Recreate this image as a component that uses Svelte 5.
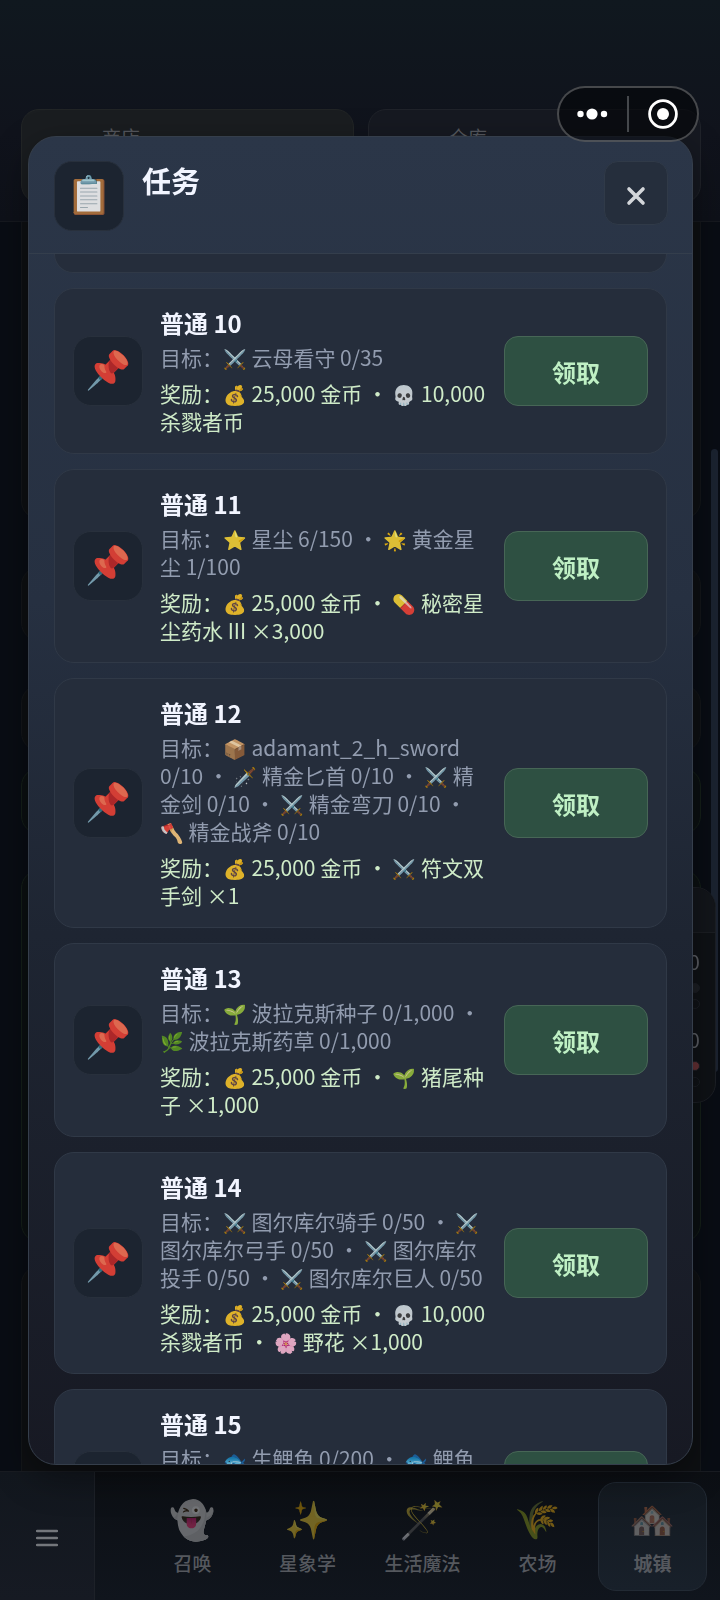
<script>
  const quests = [
    {
      id: 10,
      goal: '⚔️ 云母看守 0/35',
      reward: '💰 25,000 金币 • 💀 10,000 杀戮者币'
    },
    {
      id: 11,
      goal: '⭐ 星尘 6/150 • 🌟 黄金星尘 1/100',
      reward: '💰 25,000 金币 • 💊 秘密星尘药水 III ×3,000'
    },
    {
      id: 12,
      goal: '📦 adamant_2_h_sword 0/10 • 🗡️ 精金匕首 0/10 • ⚔️ 精金剑 0/10 • ⚔️ 精金弯刀 0/10 • 🪓 精金战斧 0/10',
      reward: '💰 25,000 金币 • ⚔️ 符文双手剑 ×1'
    },
    {
      id: 13,
      goal: '🌱 波拉克斯种子 0/1,000 • 🌿 波拉克斯药草 0/1,000',
      reward: '💰 25,000 金币 • 🌱 猪尾种子 ×1,000'
    },
    {
      id: 14,
      goal: '⚔️ 图尔库尔骑手 0/50 • ⚔️ 图尔库尔弓手 0/50 • ⚔️ 图尔库尔投手 0/50 • ⚔️ 图尔库尔巨人 0/50',
      reward: '💰 25,000 金币 • 💀 10,000 杀戮者币 • 🌸 野花 ×1,000'
    },
    {
      id: 15,
      goal: '🐟 生鲤鱼 0/200 • 🐟 鲤鱼',
      reward: ''
    }
  ];

  const tabs = [
    { icon: '👻', label: '召唤' },
    { icon: '✨', label: '星象学' },
    { icon: '🪄', label: '生活魔法' },
    { icon: '🌾', label: '农场' },
    { icon: '🏘️', label: '城镇' }
  ];

  let activeTab = '城镇';
  let open = true;
  let claimed = [];

  function claim(id) {
    claimed = [...claimed, id];
  }

  // every second part is an emoji
  function split(text) {
    return text.split(/(\p{Extended_Pictographic}\uFE0F?)/u);
  }
</script>

<div class="game">
  <header class="town-header">
    <div class="town-card shop">商店</div>
    <div class="town-card">仓库</div>
  </header>

  <main class="town-list">
    <div class="panel tall"></div>
    <div class="panel wide"></div>
    <div class="panel"></div>
    <div class="panel green"></div>
    <div class="panel green grow"></div>
    <div class="panel tail"></div>
  </main>

  <div class="scroll-thumb"></div>

  <aside class="stats">
    <div class="stats-head"></div>
    <div class="stat">
      <span>0</span>
      <i class="dot lit"></i>
      <i class="dot"></i>
    </div>
    <div class="stat">
      <span>0</span>
      <i class="dot red"></i>
      <i class="dot"></i>
    </div>
  </aside>

  <nav class="tabbar">
    <button class="menu" aria-label="菜单">
      <svg width="22" height="18" viewBox="0 0 22 18">
        <path d="M1 2h20M1 9h20M1 16h20" stroke="#74777c" stroke-width="2.4" stroke-linecap="round" />
      </svg>
    </button>
    <div class="tabs">
      {#each tabs as tab (tab.label)}
        <button class="tab" class:active={activeTab === tab.label} on:click={() => (activeTab = tab.label)}>
          <span class="tab-icon">{tab.icon}</span>
          <span class="tab-label">{tab.label}</span>
        </button>
      {/each}
    </div>
  </nav>

  {#if open}
    <div class="overlay">
      <div class="modal" role="dialog" aria-labelledby="quest-title">
        <div class="modal-header">
          <div class="icon-box"><span>📋</span></div>
          <h2 id="quest-title">任务</h2>
          <button class="close" aria-label="关闭" on:click={() => (open = false)}>
            <svg width="20" height="20" viewBox="0 0 20 20">
              <path d="M3 3l14 14M17 3L3 17" stroke="#d3d6da" stroke-width="3.6" stroke-linecap="round" />
            </svg>
          </button>
        </div>

        <div class="modal-body">
          <div class="card-end"></div>
          {#each quests as quest (quest.id)}
            <div class="quest">
              <div class="icon-box"><span>📌</span></div>
              <div class="quest-text">
                <h3>普通 {quest.id}</h3>
                <p class="goal">
                  目标：{#each split(quest.goal) as part, i}{#if i % 2}<span class="emoji">{part}</span>{:else}{part}{/if}{/each}
                </p>
                {#if quest.reward}
                  <p class="reward">
                    奖励：{#each split(quest.reward) as part, i}{#if i % 2}<span class="emoji">{part}</span>{:else}{part}{/if}{/each}
                  </p>
                {/if}
              </div>
              <button class="claim" disabled={claimed.includes(quest.id)} on:click={() => claim(quest.id)}>领取</button>
            </div>
          {/each}
        </div>
      </div>
    </div>
  {/if}

  <div class="capsule">
    <button aria-label="更多">
      <svg width="32" height="14" viewBox="0 0 32 14">
        <circle cx="3.5" cy="7" r="3.2" fill="#fff" />
        <circle cx="15" cy="7" r="5.6" fill="#fff" />
        <circle cx="27" cy="7" r="3.2" fill="#fff" />
      </svg>
    </button>
    <span class="capsule-line"></span>
    <button aria-label="退出">
      <svg width="30" height="30" viewBox="0 0 30 30">
        <circle cx="15" cy="15" r="13.4" fill="none" stroke="#fff" stroke-width="2.8" />
        <circle cx="15" cy="15" r="6" fill="#fff" />
      </svg>
    </button>
  </div>
</div>

<style>
  :global(body) {
    background: #090d14;
    overflow: hidden;
  }

  .game {
    display: flex;
    flex-direction: column;
    height: 100vh;
    overflow: hidden;
    font-family: 'Noto Sans CJK SC', 'Noto Color Emoji', sans-serif;
    color: #f2f5ff;
  }

  button {
    box-sizing: border-box;
    margin: 0;
    padding: 0;
    border: 0;
    background: none;
    font-family: inherit;
    color: inherit;
    cursor: pointer;
  }

  .town-header {
    display: grid;
    grid-template-columns: 1fr 1fr;
    gap: 14px;
    padding: 109px 19px 18px 21px;
    background: linear-gradient(#10181f, #10131c 60%, #0e1119);
    border-bottom: 1px solid #16191f;
  }

  .town-card {
    box-sizing: border-box;
    height: 94px;
    padding: 13px 80px;
    font-size: 19px;
    line-height: 28px;
    color: #55585e;
    background: #161921;
    border: 1px solid #20232a;
    border-radius: 18px;
  }

  .town-card.shop {
    background: #1a1d20;
    border-color: #222526;
  }

  .town-list {
    flex: 1;
    display: flex;
    flex-direction: column;
    padding: 0 19px 0 21px;
    overflow: hidden;
  }

  .panel {
    box-sizing: border-box;
    flex: none;
    height: 66px;
    margin-bottom: 17px;
    background: #0e1013;
    border: 1px solid #14171a;
    border-radius: 18px;
  }

  .panel.tall {
    height: 297px;
    margin-bottom: 48px;
    border-top: 0;
    border-radius: 0 0 18px 18px;
  }

  .panel.wide {
    height: 74px;
    margin-bottom: 44px;
  }

  .panel.green {
    margin-bottom: 36px;
    background: #0b1012;
    border-color: #152019;
  }

  .panel.grow {
    height: 372px;
    margin-bottom: 24px;
  }

  .panel.tail {
    height: 300px;
  }

  .scroll-thumb {
    position: fixed;
    top: 449px;
    right: 2px;
    width: 7px;
    height: 623px;
    background: #1b2330;
    border-radius: 4px;
  }

  .stats {
    position: fixed;
    top: 887px;
    right: 4px;
    box-sizing: border-box;
    width: 120px;
    height: 216px;
    background: #0f1216;
    border: 1px solid #1c1f25;
    border-radius: 20px;
    overflow: hidden;
  }

  .stats-head {
    height: 44px;
    background: #13161b;
    border-bottom: 1px solid #1b1e23;
  }

  .stat {
    display: flex;
    flex-direction: column;
    align-items: flex-end;
    gap: 6px;
    height: 78px;
    padding: 12px 15px 0 0;
    box-sizing: border-box;
    font-size: 21px;
    line-height: 32px;
    color: #5b5e64;
  }

  .dot {
    flex: none;
    box-sizing: border-box;
    width: 10px;
    height: 10px;
    border: 1px solid #1b1e24;
    border-radius: 50%;
  }

  .dot.lit {
    background: #1c1f24;
  }

  .dot.red {
    background: #643034;
  }

  .tabbar {
    flex: none;
    display: flex;
    height: 128px;
    border-top: 1px solid #191c22;
    background: linear-gradient(#0c0f14, #10151d);
  }

  .menu {
    display: flex;
    align-items: center;
    justify-content: center;
    width: 95px;
    padding-top: 4px;
    background: linear-gradient(#12171e, #161a23);
    border-right: 1px solid #1d2128;
  }

  .tabs {
    flex: 1;
    display: flex;
    align-items: center;
    justify-content: flex-end;
    gap: 6px;
    padding-right: 13px;
  }

  .tab {
    display: flex;
    flex-direction: column;
    align-items: center;
    gap: 6px;
    width: 109px;
    height: 109px;
    padding-top: 16px;
    border: 1px solid transparent;
    border-radius: 18px;
    color: #55585e;
  }

  .tab.active {
    background: linear-gradient(#141a21, #18202a);
    border-color: #222a34;
  }

  .tab-icon {
    font-family: 'Noto Color Emoji', sans-serif;
    font-size: 37px;
    line-height: 44px;
    opacity: 0.42;
  }

  .tab.active .tab-icon {
    opacity: 0.34;
  }

  .tab-label {
    font-size: 19px;
    line-height: 28px;
    font-weight: 500;
  }

  .tab.active .tab-label {
    font-weight: 700;
  }

  .overlay {
    position: fixed;
    inset: 0;
    display: flex;
    padding: 136px 27px 135px 28px;
  }

  .modal {
    flex: 1;
    display: flex;
    flex-direction: column;
    min-width: 0;
    background: linear-gradient(#2b3648, #263041 35%, #1e2532 60%, #171923);
    border: 1px solid #353e4b;
    border-radius: 28px;
    box-shadow: 0 12px 36px rgba(0, 0, 0, 0.4);
    overflow: hidden;
  }

  .modal-header {
    flex: none;
    display: flex;
    align-items: flex-start;
    gap: 18px;
    padding: 24px 24px 22px 25px;
    border-bottom: 1px solid #343e4c;
  }

  .modal-header h2 {
    flex: 1;
    margin: 0;
    font-size: 29px;
    line-height: 38px;
    font-weight: 700;
  }

  .icon-box {
    box-sizing: border-box;
    flex: none;
    display: flex;
    align-items: center;
    justify-content: center;
    width: 70px;
    height: 70px;
    font-family: 'Noto Color Emoji', sans-serif;
    font-size: 37px;
    line-height: 46px;
    background: #1c2430;
    border: 1px solid #28303c;
    border-radius: 18px;
  }

  .icon-box span,
  .emoji {
    opacity: 0.85;
  }

  .close {
    display: flex;
    align-items: center;
    justify-content: center;
    width: 64px;
    height: 64px;
    padding-top: 6px;
    background: #252e3c;
    border: 1px solid #303a48;
    border-radius: 14px;
  }

  .modal-body {
    flex: 1;
    min-height: 0;
    display: flex;
    flex-direction: column;
    gap: 15px;
    padding: 0 25px;
    overflow: hidden;
  }

  .card-end {
    flex: none;
    height: 18px;
    background: #252d3b;
    border: 1px solid #303947;
    border-top: 0;
    border-radius: 0 0 20px 20px;
  }

  .quest {
    flex: none;
    display: flex;
    align-items: center;
    gap: 17px;
    padding: 18px;
    background: #252d3b;
    border: 1px solid #303947;
    border-radius: 20px;
  }

  .quest:last-child {
    min-height: 156px;
  }

  .quest-text {
    flex: 1;
    align-self: flex-start;
    min-width: 0;
  }

  .quest-text h3 {
    margin: 0 0 4px;
    font-size: 24px;
    line-height: 32px;
    font-weight: 700;
  }

  .quest-text p {
    margin: 0;
    font-size: 21px;
    line-height: 28px;
  }

  .emoji {
    font-family: 'Noto Color Emoji', sans-serif;
    font-size: 19px;
    line-height: 20px;
  }

  .goal {
    color: #929caf;
  }

  .quest-text .reward {
    margin-top: 8px;
    color: #cfebc8;
  }

  .claim {
    flex: none;
    width: 144px;
    height: 70px;
    font-size: 24px;
    font-weight: 700;
    color: #bff0c4;
    background: #2e5042;
    border: 1px solid #476656;
    border-radius: 14px;
  }

  .capsule {
    position: fixed;
    top: 86px;
    right: 21px;
    display: flex;
    align-items: center;
    box-sizing: border-box;
    width: 142px;
    height: 56px;
    background: rgba(5, 6, 9, 0.65);
    border: 2px solid rgba(255, 255, 255, 0.25);
    border-radius: 28px;
  }

  .capsule button {
    flex: 1;
    display: flex;
    align-items: center;
    justify-content: center;
  }

  .capsule-line {
    width: 2px;
    height: 36px;
    background: #45484c;
  }
</style>
